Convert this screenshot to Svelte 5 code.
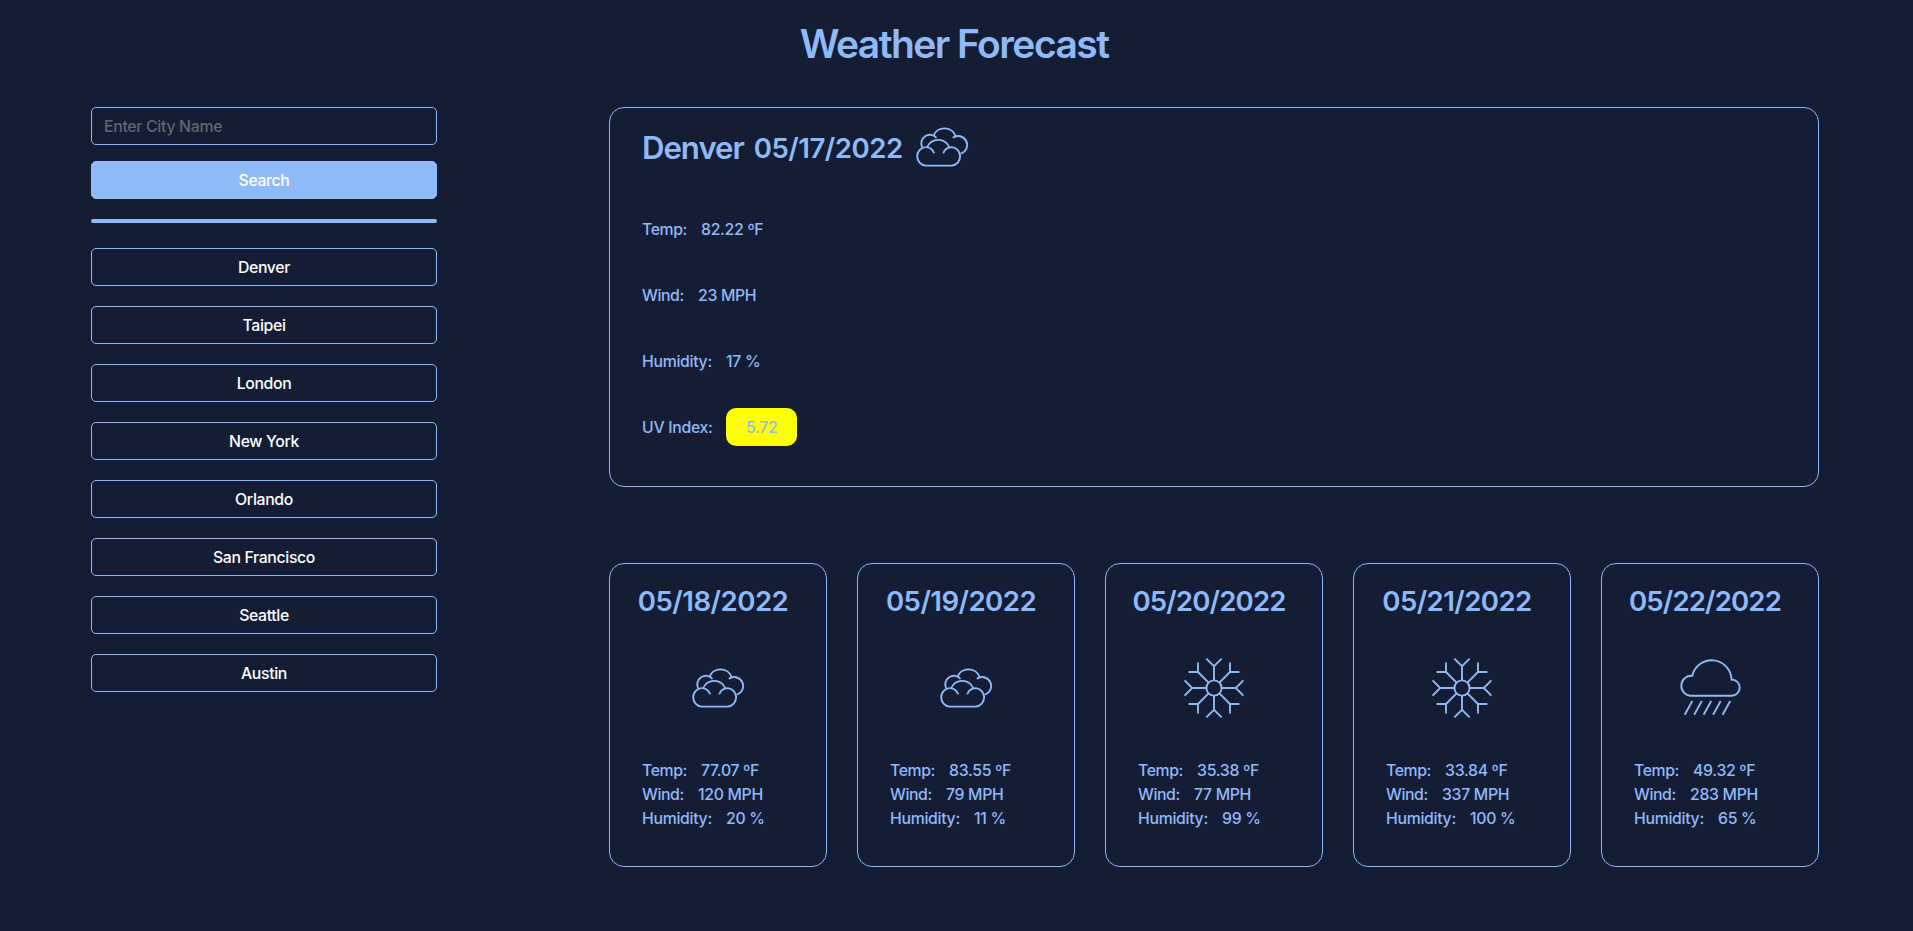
<script>
  let query = $state('');

  const cities = ['Denver', 'Taipei', 'London', 'New York', 'Orlando', 'San Francisco', 'Seattle', 'Austin'];

  const days = [
    { date: '05/18/2022', tracking: -0.5, icon: 'clouds', temp: '77.07', wind: '120', humidity: '20' },
    { date: '05/19/2022', tracking: -0.55, icon: 'clouds', temp: '83.55', wind: '79', humidity: '11' },
    { date: '05/20/2022', tracking: -0.84, icon: 'snow', temp: '35.38', wind: '77', humidity: '99' },
    { date: '05/21/2022', tracking: -0.58, icon: 'snow', temp: '33.84', wind: '337', humidity: '100' },
    { date: '05/22/2022', tracking: -0.86, icon: 'rain', temp: '49.32', wind: '283', humidity: '65' }
  ];
</script>

{#snippet weatherIcon(name)}
  <svg class="icon" viewBox="0 0 64 64" aria-hidden="true">
    {#if name === 'clouds'}
      <g transform="translate(-0.5 0)">
        <path d="M16 32.1A9.3 9.3 0 0 0 16 50.6H42.3A9.3 9.3 0 0 0 42.3 32.1A9.3 9.3 0 0 0 33.7 38.3" />
        <path d="M16 32.1A9.3 9.3 0 0 1 24.7 38.3" />
        <path d="M17.7 32.2A11.9 11.9 0 0 1 39.7 32.2" />
        <path d="M12.6 32.3A8.7 8.7 0 0 1 27 22.8" />
        <path d="M23.7 21.3A12 12 0 0 1 46.3 21.3" />
        <path d="M43.3 22.8A9 9 0 1 1 51.7 38.5" />
      </g>
    {:else if name === 'snow'}
      <circle cx="32" cy="32" r="7.6" />
      {#each [0, 90, 180, 270] as angle}
        <g transform="rotate({angle} 32 32)">
          <path d="M32 24.4V10.2M24.3 2.6L32 10.2L39.7 2.6" />
          <path d="M37.4 26.6L48 16M48 6.6V16H57.4" />
        </g>
      {/each}
    {:else}
      <path d="M12.3 39.7A10 10 0 0 1 14.3 19.8A19.9 19.9 0 0 1 53.6 23.5A8.1 8.1 0 0 1 53.6 39.7Z" />
      <path d="M14.3 45L6.7 58.7M23.8 45L16.2 58.7M33.2 45L25.6 58.7M42.7 45L35.1 58.7M52.2 45L44.6 58.7" />
    {/if}
  </svg>
{/snippet}

<div class="page">
  <h1>Weather Forecast</h1>
  <div class="layout">
    <aside>
      <input type="text" placeholder="Enter City Name" bind:value={query} />
      <button class="search">Search</button>
      <hr />
      <div class="history">
        {#each cities as city}
          <button class="city">{city}</button>
        {/each}
      </div>
    </aside>
    <main>
      <section class="current">
        <header>
          <h2>Denver</h2>
          <h3>05/17/2022</h3>
          {@render weatherIcon('clouds')}
        </header>
        <p><span class="tight">Temp:</span><span>82.22 ºF</span></p>
        <p><span class="tight">Wind:</span><span>23 MPH</span></p>
        <p><span>Humidity:</span><span>17 %</span></p>
        <p class="index"><span>UV Index:</span><span class="uv">5.72</span></p>
      </section>
      <section class="forecast">
        {#each days as day}
          <article>
            <h3 style:letter-spacing="{day.tracking}px">{day.date}</h3>
            {@render weatherIcon(day.icon)}
            <div class="stats">
              <p><span class="tight">Temp:</span><span>{day.temp} ºF</span></p>
              <p><span class="tight">Wind:</span><span>{day.wind} MPH</span></p>
              <p><span>Humidity:</span><span>{day.humidity} %</span></p>
            </div>
          </article>
        {/each}
      </section>
    </main>
  </div>
</div>

<style>
  :global(body) {
    background: #151d35;
  }
  .page {
    box-sizing: border-box;
    min-height: 931px;
    padding: 20px 94px 0 91px;
    color: #8fbaf9;
    font: 450 15.8px/24px Inter, "Liberation Sans", sans-serif;
    letter-spacing: -0.3px;
  }
  h1, h2, h3, p {
    margin: 0;
    white-space: nowrap;
  }
  h1 {
    font-size: 39px;
    font-weight: 600;
    line-height: 48px;
    letter-spacing: -1.55px;
    text-align: center;
    padding-right: 2px;
    margin-bottom: 39px;
  }
  .layout {
    display: flex;
    justify-content: space-between;
    align-items: flex-start;
  }
  aside {
    width: 346px;
    display: flex;
    flex-direction: column;
  }
  input, button {
    box-sizing: border-box;
    display: block;
    width: 100%;
    height: 38px;
    margin: 0;
    border: 1px solid #8fbaf9;
    border-radius: 5px;
    background: transparent;
    color: #fff;
    font: inherit;
    letter-spacing: inherit;
    outline: none;
  }
  input {
    padding: 0 12px;
  }
  input::placeholder {
    color: #5f6972;
    opacity: 1;
  }
  button {
    padding: 2px 0 0;
    letter-spacing: -0.35px;
    text-align: center;
  }
  .search {
    margin-top: 16px;
    background: #8fbaf9;
  }
  hr {
    width: 100%;
    height: 4px;
    margin: 20px 0 25px;
    border: 0;
    border-radius: 2px;
    background: #8fbaf9;
  }
  .history {
    display: grid;
    gap: 20px;
  }
  main {
    width: 1210px;
  }
  .current, article {
    box-sizing: border-box;
    border: 1px solid #8fbaf9;
    border-radius: 15px;
  }
  .current {
    height: 380px;
    padding: 0 32px;
  }
  header {
    display: flex;
    align-items: center;
    height: 64px;
    padding-top: 7px;
    margin-bottom: 17px;
  }
  h2 {
    font-size: 31.2px;
    font-weight: 600;
    line-height: 38px;
    letter-spacing: -1.05px;
    margin: 2px 10px 0 0;
  }
  h3 {
    font-size: 27.6px;
    font-weight: 600;
    line-height: 34px;
    letter-spacing: -0.5px;
  }
  header h3 {
    margin: 1px 7.5px 0 0;
  }
  .icon {
    display: block;
    flex: none;
    width: 64px;
    height: 64px;
    fill: none;
    stroke: #8fbaf9;
    stroke-width: 1.9;
  }
  p {
    display: flex;
    align-items: center;
    gap: 14.2px;
  }
  .current p {
    height: 66px;
  }
  .current p:not(.index) {
    box-sizing: border-box;
    padding-top: 2px;
  }
  .index {
    gap: 13.7px;
  }
  .index span {
    padding-top: 2px;
  }
  .tight {
    letter-spacing: -0.42px;
  }
  .uv {
    box-sizing: border-box;
    width: 71px;
    height: 38px;
    border-radius: 10px;
    background: #ff0;
    line-height: 36px;
    text-align: center;
  }
  .forecast {
    display: grid;
    grid-template-columns: repeat(5, 218px);
    gap: 30px;
    margin-top: 76px;
  }
  article {
    height: 304px;
    padding-top: 20px;
    display: flex;
    flex-direction: column;
    align-items: center;
  }
  article h3 {
    padding-right: 10px;
    margin-bottom: 38px;
  }
  .stats {
    align-self: stretch;
    margin-top: 39px;
    padding-left: 32px;
  }
</style>
